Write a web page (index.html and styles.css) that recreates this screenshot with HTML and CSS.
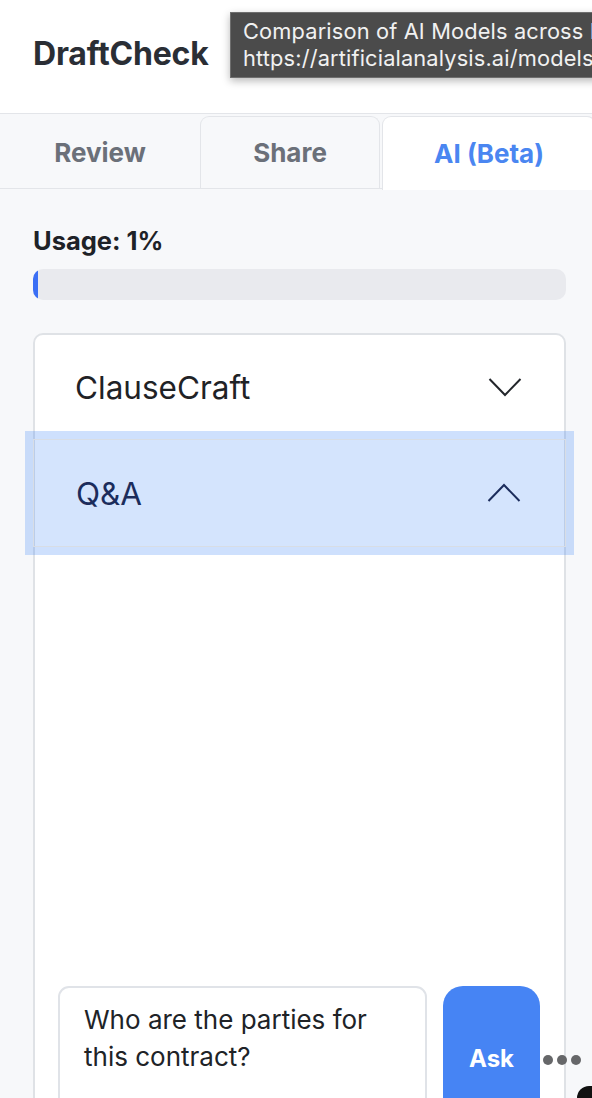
FILE: index.html
```html
<!DOCTYPE html>
<html lang="en">
<head>
<meta charset="utf-8">
<title>DraftCheck</title>
<link rel="stylesheet" href="styles.css">
</head>
<body>
<div class="app">
  <header class="header">
    <h1 class="brand">DraftCheck</h1>
  </header>
  <div class="tooltip">Comparison of AI Models across Intelligence, Performance, Price<br>https://artificialanalysis.ai/models</div>
  <nav class="tabs">
    <div class="tab tab-review">Review</div>
    <div class="tab tab-share">Share</div>
    <div class="tab tab-ai">AI (Beta)</div>
  </nav>
  <main class="panel">
    <div class="usage-label">Usage: 1%</div>
    <div class="progress"><div class="progress-fill" style="width:1%"></div></div>
    <section class="card">
      <div class="acc-row">
        <span class="acc-title">ClauseCraft</span>
        <svg class="chev" width="34" height="20" viewBox="0 0 34 20"><polyline points="1.5,2 17,18 32.5,2" fill="none" stroke="#23262b" stroke-width="2" stroke-linejoin="miter"/></svg>
      </div>
      <div class="acc-row acc-active">
        <span class="acc-title">Q&amp;A</span>
        <svg class="chev" width="34" height="20" viewBox="0 0 34 20"><polyline points="1.5,18 17,2 32.5,18" fill="none" stroke="#1b2c5c" stroke-width="2" stroke-linejoin="miter"/></svg>
      </div>
      <div class="qa-body"></div>
      <div class="ask-row">
        <div class="question">Who are the parties for this contract?</div>
        <button class="ask-btn">Ask</button>
      </div>
    </section>
  </main>
  <div class="dots"><span></span><span></span><span></span></div>
  <div class="corner"></div>
</div>
</body>
</html>
```
FILE: styles.css
```css
html, body {
  margin: 0;
  padding: 0;
}
body {
  width: 592px;
  height: 1098px;
  overflow: hidden;
  background: #f7f8fa;
  font-family: Inter, "Noto Sans", sans-serif;
}
.app {
  position: relative;
  width: 592px;
  height: 1098px;
  overflow: hidden;
}
.header {
  height: 114px;
  background: #ffffff;
  border-bottom: 1.5px solid #e3e5e9;
  display: flex;
  align-items: center;
  padding-left: 33px;
  box-sizing: border-box;
}
.brand {
  margin: 0;
  font-size: 32px;
  font-weight: 700;
  color: #2a2e35;
  letter-spacing: -0.2px;
  transform: translateY(-3px);
}
.tooltip {
  position: absolute;
  left: 230px;
  top: 12px;
  width: 520px;
  height: 66px;
  box-sizing: border-box;
  padding: 5px 12px;
  background: #4b4b4b;
  border: 1px solid #6e6e6e;
  box-shadow: 0 3px 8px rgba(0, 0, 0, 0.28);
  color: #f1f1f1;
  font-family: Inter, "Noto Sans", sans-serif;
  font-size: 21.8px;
  line-height: 27px;
  white-space: nowrap;
  letter-spacing: 0.15px;
}
.tabs {
  display: flex;
  height: 75px;
  padding-top: 2px;
  box-sizing: border-box;
  border-bottom: 1.5px solid #e3e5e9;
  background: #f7f8fa;
}
.tab {
  flex: none;
  display: flex;
  align-items: center;
  justify-content: center;
  font-size: 26px;
  font-weight: 700;
  color: #6b7079;
  box-sizing: border-box;
}
.tab-review {
  width: 200px;
}
.tab-share {
  width: 180px;
  border: 1.5px solid #e3e5e9;
  border-bottom: none;
  border-radius: 9px 9px 0 0;
}
.tab-ai {
  width: 214px;
  margin-left: 2px;
  background: #ffffff;
  border: 1.5px solid #e3e5e9;
  border-bottom: none;
  border-radius: 9px 9px 0 0;
  color: #4a86f1;
  margin-bottom: -1.5px;
}
.panel {
  padding: 0 26px 0 33px;
}
.usage-label {
  margin-top: 36px;
  font-size: 25.5px;
  font-weight: 700;
  color: #1e2227;
  line-height: 31px;
}
.progress {
  margin-top: 13px;
  height: 31px;
  border-radius: 10px;
  background: #e9eaee;
  overflow: hidden;
}
.progress-fill {
  height: 100%;
  background: #3b6ff5;
  border-radius: 10px 0 0 10px;
}
.card {
  margin-top: 33px;
  height: 820px;
  background: #ffffff;
  border: 2px solid #dfe2e6;
  border-radius: 10px;
  display: flex;
  flex-direction: column;
}
.acc-row {
  height: 104px;
  flex: none;
  display: flex;
  align-items: center;
  justify-content: space-between;
  padding: 0 42px 0 40px;
  box-sizing: border-box;
}
.acc-title {
  font-size: 31.5px;
  color: #1f2226;
}
.acc-active {
  height: 108px;
  margin: 0 -2px;
  padding: 0 44px 0 42px;
  background: rgba(59, 130, 246, 0.22);
  border: 1.5px solid #d8dde5;
  box-shadow: 0 0 0 8px rgba(59, 130, 246, 0.25);
}
.acc-active .acc-title {
  color: #1b2c5c;
}
.chev {
  display: block;
}
.qa-body {
  height: 439px;
  flex: none;
}
.ask-row {
  display: flex;
  gap: 16px;
  padding-left: 23px;
  height: 144px;
  flex: none;
}
.question {
  width: 369px;
  flex: none;
  box-sizing: border-box;
  border: 2px solid #e0e3e8;
  border-radius: 11px;
  padding: 13px 20px 0 24px;
  font-size: 26px;
  line-height: 37px;
  color: #202327;
}
.ask-btn {
  width: 97px;
  flex: none;
  border: none;
  border-radius: 20px 20px 0 0;
  background: #4684f4;
  color: #ffffff;
  font-family: Inter, "Noto Sans", sans-serif;
  font-size: 24px;
  font-weight: 700;
  padding: 0;
}
.dots {
  position: absolute;
  left: 543px;
  top: 1055px;
  display: flex;
  gap: 4px;
}
.dots span {
  width: 10px;
  height: 10px;
  border-radius: 50%;
  background: #666769;
}
.corner {
  position: absolute;
  right: 0;
  bottom: 0;
  width: 15px;
  height: 12px;
  background: #111111;
  border-top-left-radius: 12px;
}
```
